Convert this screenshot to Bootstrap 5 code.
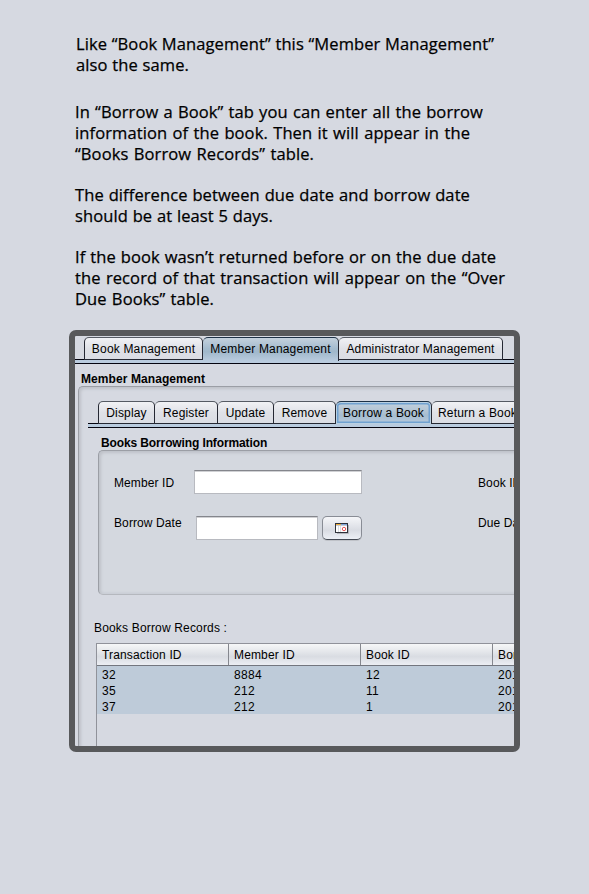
<!DOCTYPE html>
<html lang="en">
<head>
<meta charset="utf-8">
<meta name="viewport" content="width=device-width, initial-scale=1">
<title>Member Management</title>
<link href="https://cdn.jsdelivr.net/npm/bootstrap@5.3.0/dist/css/bootstrap.min.css" rel="stylesheet">
<style>
  body { background: #d6d9e1; color: #000; overflow: hidden; height: 894px; }
  .guide { padding: 34px 0 0 75px; font: 16.5px/20.8px "Trebuchet MS", "Open Sans", "Noto Sans", sans-serif; letter-spacing: .1px; -webkit-text-stroke: .25px #000; height: 330px; }
  .guide p { margin: 0; line-height: inherit; }
  .guide .ln { display: block; white-space: nowrap; text-align-last: justify; }
  .p1 { height: 68px; padding-left: 1px; } .p2 { height: 83px; } .p3 { height: 62px; }
  .w418 { width: 418px; } .w112 { width: 113px; } .w407 { width: 408px; } .w394 { width: 395px; }
  .w238 { width: 239px; } .w197 { width: 198px; } .w421 { width: 421px; } .w430 { width: 430px; } .w139 { width: 139px; }
  .shot { margin-left: 69px; width: 451px; height: 422px; border: 6px solid #58595b; border-radius: 7px; font: 12px/16px "Liberation Sans", Arial, sans-serif; letter-spacing: .1px; white-space: nowrap; }
  .inside { width: 600px; height: 410px; padding-top: 1px; }
  .strip { height: 27px; background: linear-gradient(transparent 22px, #04040f 22px 23px, #b9cbde 23px 26px, #04040f 26px); }
  .strip.main { padding-left: 9px; }
  .strip.sub { margin-left: 9px; padding-left: 10px; }
  .tabx { height: 23px; border: 1px solid #252833; border-top-color: #555a63; border-left-width: 0; border-radius: 5px 5px 0 0; background: linear-gradient(#f1f2f5, #dfe1e7 50%, #dadde4); text-align: center; line-height: 23px; letter-spacing: .17px; flex: none; }
  .tabx.first { border-left-width: 1px; }
  .tabx.on { height: 24px; border-bottom: 0; background: linear-gradient(#c4d1dd, #a5bccf 45%, #a0b8cb 60%, #b9cbde); border-top-color: #1d3146; }
  .tabx.focused { height: 23px; background: linear-gradient(#c4d1dd, #b0c3d3 45%, #a5bccf 60%, #b9cbde); box-shadow: inset 0 0 0 1px #b9d0e2, inset 0 0 0 2.500px #70a1d0; }
  .t119 { width: 119px; } .t136 { width: 136px; } .t164 { width: 164px; } .t57 { width: 57px; } .t63 { width: 63px; }
  .t56 { width: 56px; } .t62 { width: 62px; } .t96 { width: 96px; } .t92 { width: 92px; }
  .heading { font-weight: 700; height: 22px; line-height: 31px; letter-spacing: .08px; padding-left: 6px; }
  .heading.sub { padding-left: 22px; letter-spacing: -.12px; }
  .pane { border: 1px solid #9b9ea5; border-right: 0; border-radius: 5px 0 0 5px; box-shadow: inset 2px 2px 3px #bfc2c9, inset 0 -2px 2px #ccd0d7; background: #d4d8df; }
  .outerpane { margin-left: 3px; height: 380px; padding-top: 14px; background: #d6d9e1; }
  .borrow { margin-left: 19px; height: 145px; padding: 19px 0 0 15px; border-bottom-color: #b5b8be; }
  .cell-l { width: 80px; line-height: 26px; }
  .cell-l.right { margin-left: 116px; }
  .dates { margin-top: 20px; }
  .dates .cell-l { line-height: 14px; }
  .dates .cell-l:first-child { width: 82px; }
  .field { height: 24px; width: 168px; background: #fff; border: 1px solid #b8bac0; border-top: 1px solid #84868c; box-shadow: inset 0 1px 0 #d0d1d4; }
  .dates .field { width: 122px; }
  .calbtn { width: 40px; height: 24px; margin-left: 4px; padding: 0; border: 1px solid #888c95; border-bottom-color: #444953; border-radius: 5px; background: linear-gradient(#f5f6f9, #d9dce3 60%, #eceff5); box-shadow: 0 1px 0 #bfc2c8; line-height: 0; }
  .caption-rec { height: 48px; padding: 25px 0 0 15px; letter-spacing: .17px; }
  .rec { margin-left: 17px; width: 528px; border-left: 1px solid #90929a; border-top: 1px solid #90929a; height: 110px; }
  .head { height: 22px; background: linear-gradient(#f6f7f8, #d9dce2 60%, #eceef3); border-bottom: 1px solid #73767e; line-height: 22px; letter-spacing: .15px; }
  .head > div, .line > div { width: 132px; padding-left: 5px; flex: none; }
  .head > div { border-right: 1px solid #85878e; }
  .line { height: 16px; background: #becbd9; line-height: 18px; letter-spacing: .3px; }
</style>
</head>
<body>
<section class="guide">
  <p class="p1"><span class="ln w418">Like “Book Management” this “Member Management”</span><span class="ln w112">also the same.</span></p>
  <p class="p2"><span class="ln w407">In “Borrow a Book” tab you can enter all the borrow</span><span class="ln w394">information of the book. Then it will appear in the</span><span class="ln w238">“Books Borrow Records” table.</span></p>
  <p class="p3"><span class="ln w394">The difference between due date and borrow date</span><span class="ln w197">should be at least 5 days.</span></p>
  <p><span class="ln w421">If the book wasn’t returned before or on the due date</span><span class="ln w430">the record of that transaction will appear on the “Over</span><span class="ln w139">Due Books” table.</span></p>
</section>

<main class="shot overflow-hidden">
  <div class="inside">
    <div class="strip main d-flex">
      <div class="tabx first t119">Book Management</div>
      <div class="tabx on t136">Member Management</div>
      <div class="tabx t164">Administrator Management</div>
    </div>
    <div class="heading">Member Management</div>
    <div class="pane outerpane">
      <div class="strip sub d-flex">
        <div class="tabx first t57">Display</div>
        <div class="tabx t63">Register</div>
        <div class="tabx t56">Update</div>
        <div class="tabx t62">Remove</div>
        <div class="tabx on focused t96">Borrow a Book</div>
        <div class="tabx t92">Return a Book</div>
      </div>
      <div class="heading sub">Books Borrowing Information</div>
      <div class="pane borrow">
        <div class="d-flex">
          <div class="cell-l">Member ID</div><div class="field"></div>
          <div class="cell-l right">Book ID</div>
        </div>
        <div class="d-flex dates">
          <div class="cell-l">Borrow Date</div><div class="field"></div>
          <button type="button" class="btn calbtn" aria-label="Pick date">
            <svg width="14" height="11" viewBox="0 0 14 11">
              <path d="M2 10.500h11.500V2" fill="none" stroke="#b3b5bb"/>
              <rect x="0" y="0" width="13" height="10" fill="#30323a"/>
              <rect x="1" y="1" width="11" height="8" fill="#fff"/>
              <rect x="1" y="1" width="5" height="1" fill="#f0ae36"/><rect x="6" y="1" width="6" height="1" fill="#7fa8dc"/>
              <path d="M1 2.500h11" stroke="#c5cbd6"/><path d="M3.500 3v6M5.500 3v6" stroke="#dcdee3"/>
              <circle cx="9" cy="6" r="1.700" fill="#fff" stroke="#e65a5a"/>
            </svg>
          </button>
          <div class="cell-l right">Due Date</div>
        </div>
      </div>
      <div class="caption-rec">Books Borrow Records :</div>
      <div class="rec">
        <div class="head d-flex"><div>Transaction ID</div><div>Member ID</div><div>Book ID</div><div>Borrow Date</div></div>
        <div class="line d-flex"><div>32</div><div>8884</div><div>12</div><div>2011</div></div>
        <div class="line d-flex"><div>35</div><div>212</div><div>11</div><div>2011</div></div>
        <div class="line d-flex"><div>37</div><div>212</div><div>1</div><div>2011</div></div>
      </div>
    </div>
  </div>
</main>
<script src="https://cdn.jsdelivr.net/npm/bootstrap@5.3.0/dist/js/bootstrap.bundle.min.js"></script>
</body>
</html>
